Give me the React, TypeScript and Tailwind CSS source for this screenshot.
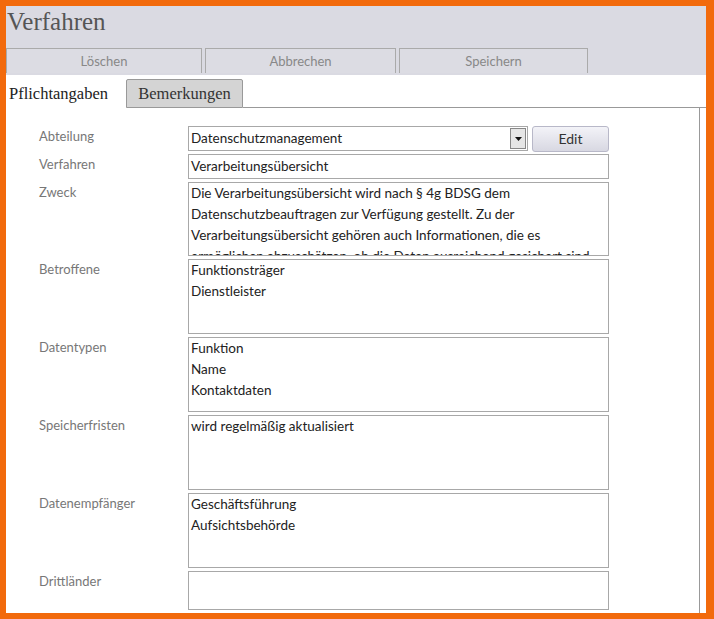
export default function App() {
  const box = "w-[421px] border border-[#a8a8a8] bg-white px-[2px] text-[13.5px] leading-[21px] text-[#222] overflow-hidden";
  const label = "w-[182px] pl-[33px] text-[13px] text-[#777] leading-[21px]";
  const rows: { label: string; lines: string[]; h: string }[] = [
    { label: "Betroffene", lines: ["Funktionsträger", "Dienstleister"], h: "h-[75px]" },
    { label: "Datentypen", lines: ["Funktion", "Name", "Kontaktdaten"], h: "h-[75px]" },
    { label: "Speicherfristen", lines: ["wird regelmäßig aktualisiert"], h: "h-[75px]" },
    { label: "Datenempfänger", lines: ["Geschäftsführung", "Aufsichtsbehörde"], h: "h-[75px]" },
    { label: "Drittländer", lines: [], h: "h-[39px]" },
  ];
  return (
    <div className="h-[619px] w-[714px] bg-[#f26a0c] pt-[6px] pl-[6px] pr-[8px] pb-[6px]" style={{ fontFamily: "Lato, 'Open Sans', sans-serif" }}>
      <div className="h-full bg-white overflow-hidden flex flex-col">
        <div className="bg-[#dadae2] h-[69px] flex flex-col">
          <div className="h-[42px] pl-[1px] pt-[1px] text-[25px] text-[#555] leading-[30px]" style={{ fontFamily: "'Liberation Serif', serif" }}>Verfahren</div>
          <div className="flex gap-[3px]">
            {[["Löschen", "w-[196px]"], ["Abbrechen", "w-[191px]"], ["Speichern", "w-[189px]"]].map(([t, w]) => (
              <div key={t} className={`${w} h-[25px] border border-[#aaa] border-b-0 bg-[#dcdce3] text-center text-[13px] leading-[24px] text-[#888]`}>{t}</div>
            ))}
          </div>
        </div>
        <div className="flex items-end h-[33px] pt-[4px]" style={{ fontFamily: "'Liberation Serif', serif" }}>
          <div className="w-[118px] h-[29px] bg-white text-[16.5px] text-[#222] leading-[30px] pl-[3px] whitespace-nowrap">Pflichtangaben</div>
          <div className="w-[117px] ml-[2px] h-[29px] bg-[#d4d4d4] border border-[#999] rounded-t-[2px] text-[16.5px] text-[#333] leading-[28px] text-center whitespace-nowrap">Bemerkungen</div>
          <div className="flex-1 border-b border-[#999] h-full" />
        </div>
        <div className="flex-1 mr-[6px] border-r border-[#999] pt-[18px] flex flex-col gap-[3px]">
          <div className="flex h-[25px]">
            <div className={label}>Abteilung</div>
            <div className="flex w-[340px] h-[25px] border border-[#a8a8a8] items-center pl-[2px] text-[13.5px] text-[#222]">
              <span className="flex-1">Datenschutzmanagement</span>
              <span className="w-[16px] h-[21px] mr-[1px] border border-[#888] bg-[#e6e6e6] flex items-center justify-center">
                <svg width="7" height="4" viewBox="0 0 7 4"><path d="M0 0h7L3.5 4z" fill="#111" /></svg>
              </span>
            </div>
            <div className="ml-[4px] w-[77px] h-[26px] rounded-[3px] border border-[#b8b8c8] bg-gradient-to-b from-[#f3f3f8] to-[#d8d8e2] text-center text-[14px] leading-[24px] text-[#333]">Edit</div>
          </div>
          <div className="flex">
            <div className={label}>Verfahren</div>
            <div className={`${box} h-[25px] leading-[23px]`}>Verarbeitungsübersicht</div>
          </div>
          <div className="flex">
            <div className={label}>Zweck</div>
            <div className={`${box} h-[74px]`}>
              Die Verarbeitungsübersicht wird nach § 4g BDSG dem Datenschutzbeauftragen zur Verfügung gestellt. Zu der Verarbeitungsübersicht gehören auch Informationen, die es ermöglichen abzuschätzen, ob die Daten ausreichend gesichert sind.
            </div>
          </div>
          {rows.map((r) => (
            <div key={r.label} className="flex">
              <div className={label}>{r.label}</div>
              <div className={`${box} ${r.h}`}>
                {r.lines.map((l) => <div key={l}>{l}</div>)}
              </div>
            </div>
          ))}
        </div>
      </div>
    </div>
  );
}
